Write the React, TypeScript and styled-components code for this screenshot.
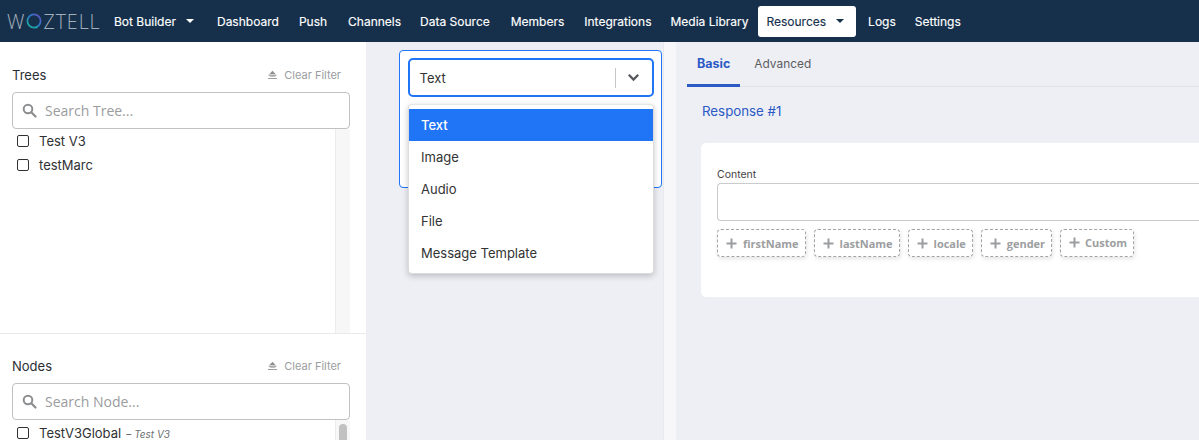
import React from "react";
import styled, { createGlobalStyle } from "styled-components";

const Global = createGlobalStyle`
  html, body { margin: 0; padding: 0; height: 100%; overflow: hidden; }
  body { font-family: "Inter", "Liberation Sans", Arial, sans-serif; background: #eeeff5; }
  * { box-sizing: border-box; }
`;

const Page = styled.div`
  width: 1199px;
  height: 440px;
  display: flex;
  flex-direction: column;
  overflow: hidden;
`;

const NavBar = styled.nav`
  height: 42px;
  flex: none;
  background: #16304c;
  display: flex;
  align-items: center;
  padding-left: 7px;
`;

const Logo = styled.div`
  width: 95px;
  margin-right: 12px;
  display: flex;
  align-items: center;
`;

const LogoWord = styled.span`
  font-family: "Open Sans", "Liberation Sans", Arial, sans-serif;
  font-size: 19.5px;
  letter-spacing: 1px;
  color: #a3afbb;
  font-weight: 300;
  display: inline-flex;
  align-items: center;
`;

const NavItem = styled.div<{ $active?: boolean; $gap: number }>`
  height: 31px;
  display: flex;
  align-items: center;
  gap: 10px;
  padding: 0 ${(p) => (p.$active ? "12px" : "0")} 0 ${(p) => (p.$active ? "8px" : "0")};
  margin-right: ${(p) => p.$gap}px;
  border-radius: 3px;
  font-size: 12px;
  font-weight: 400;
  -webkit-text-stroke: 0.15px currentColor;
  white-space: nowrap;
  background: ${(p) => (p.$active ? "#ffffff" : "transparent")};
  color: ${(p) => (p.$active ? "#16304c" : "#ffffff")};
`;

const Caret = styled.span<{ $dark?: boolean }>`
  width: 0;
  height: 0;
  border-left: 4px solid transparent;
  border-right: 4px solid transparent;
  border-top: 4px solid ${(p) => (p.$dark ? "#16304c" : "#ffffff")};
`;

const Body = styled.div`
  flex: 1;
  display: flex;
  min-height: 0;
`;

const Sidebar = styled.aside`
  width: 366px;
  flex: none;
  background: #ffffff;
  display: flex;
  flex-direction: column;
`;

const FilterSection = styled.section<{ $fill?: boolean }>`
  padding: ${(p) => (p.$fill ? "23px" : "22px")} 16px 0 12px;
  height: ${(p) => (p.$fill ? "292px" : "auto")};
  flex: ${(p) => (p.$fill ? "none" : "1")};
  display: flex;
  flex-direction: column;
  border-bottom: ${(p) => (p.$fill ? "1px solid #e9eaec" : "0")};
  min-height: 0;
  overflow: hidden;
`;

const SectionHead = styled.div`
  height: 20px;
  flex: none;
  display: flex;
  justify-content: space-between;
  align-items: center;
  padding-right: 9px;
  margin-bottom: 7px;
`;

const SectionTitle = styled.h3`
  margin: 0;
  font-size: 13px;
  font-weight: 400;
  color: #2b2f33;
`;

const ClearFilter = styled.span`
  display: flex;
  align-items: center;
  gap: 6px;
  font-size: 11px;
  color: #9b9d9f;
`;

const SearchBox = styled.div`
  height: 37px;
  flex: none;
  border: 1px solid #bfc1c4;
  border-radius: 4px;
  display: flex;
  align-items: center;
  gap: 8px;
  padding-left: 9px;
  background: #fff;
`;

const SearchText = styled.span`
  font-family: "Open Sans", "Liberation Sans", sans-serif;
  font-size: 14px;
  color: #9a9c9e;
`;

const ListArea = styled.div`
  flex: 1;
  display: flex;
  min-height: 0;
`;

const List = styled.div<{ $inset?: boolean }>`
  flex: 1;
  padding: ${(p) => (p.$inset ? "1px" : "0")} 0 0 5px;
`;

const ScrollTrack = styled.div`
  width: 15px;
  flex: none;
  background: #f7f7f7;
  border-left: 1px solid #ececec;
  display: flex;
  justify-content: center;
`;

const ScrollThumb = styled.div`
  width: 8px;
  height: 60px;
  margin-top: 4px;
  border-radius: 4px;
  background: #c1c1c1;
`;

const Row = styled.div`
  height: 24px;
  display: flex;
  align-items: center;
  gap: 10px;
  font-size: 13px;
  color: #2f3133;
  white-space: nowrap;
`;

const Check = styled.span`
  width: 12px;
  height: 12px;
  border: 1px solid #2f3133;
  border-radius: 2px;
  flex: none;
`;

const RowDash = styled.span`
  font-size: 10px;
  color: #55585c;
  margin: 0 3px 0 5px;
`;

const RowMeta = styled.em`
  font-size: 10px;
  color: #6d6f72;
`;

const Middle = styled.div`
  width: 297px;
  flex: none;
  background: #eeeff5;
  padding: 8px 0 0 33px;
`;

const Gutter = styled.div`
  width: 13px;
  flex: none;
  background: #f7f7f9;
  border-left: 1px solid #e8e9ed;
`;

const Card = styled.div`
  position: relative;
  width: 263px;
  height: 138px;
  border: 1px solid #1f75f5;
  border-radius: 4px;
  background: #fff;
  padding: 7px 7.5px 0;
`;

const SelectControl = styled.div`
  height: 39px;
  border: 2px solid #1f75f5;
  border-radius: 5px;
  display: flex;
  align-items: center;
  padding-left: 10px;
  font-size: 13px;
  color: #333;
  background: #fff;
`;

const SelectValue = styled.span`
  flex: 1;
`;

const SelectSep = styled.span`
  width: 1px;
  height: 20px;
  background: #c6c6c6;
`;

const SelectArrow = styled.span`
  width: 36px;
  display: flex;
  justify-content: center;
  align-items: center;
`;

const Menu = styled.div`
  position: absolute;
  left: 7.5px;
  top: 53px;
  width: 246px;
  background: #fff;
  border-radius: 4px;
  border: 1px solid #dcdcdc;
  border-top-color: #e6e6e6;
  box-shadow: 0 2px 6px rgba(0, 0, 0, 0.22);
  padding: 4px 0;
  z-index: 2;
`;

const MenuItem = styled.div<{ $selected?: boolean }>`
  height: 32px;
  display: flex;
  align-items: center;
  padding-left: 12.5px;
  font-size: 13px;
  font-weight: ${(p) => (p.$selected ? 500 : 400)};
  background: ${(p) => (p.$selected ? "#1f75f5" : "#fff")};
  color: ${(p) => (p.$selected ? "#fff" : "#333")};
`;

const Right = styled.main`
  flex: 1;
  min-width: 0;
  background: #eeeff5;
  padding-left: 11px;
  overflow: hidden;
`;

const Tabs = styled.div`
  height: 45px;
  display: flex;
  border-bottom: 1px solid #e2e3e6;
`;

const Tab = styled.div<{ $active?: boolean }>`
  height: 45px;
  display: flex;
  align-items: center;
  padding: 0 ${(p) => (p.$active ? "10px" : "13px")} ${(p) => (p.$active ? "0" : "3px")};
  margin-right: ${(p) => (p.$active ? "1px" : "0")};
  font-size: ${(p) => (p.$active ? "12.5px" : "11.9px")};
  font-weight: ${(p) => (p.$active ? 700 : 400)};
  color: ${(p) => (p.$active ? "#2b5ac4" : "#5b5d61")};
  border-bottom: ${(p) => (p.$active ? "3px solid #2b5ac4" : "0")};
`;

const ResponseTitle = styled.h2`
  margin: 14px 0 0 15px;
  height: 20px;
  font-size: 13.3px;
  font-weight: 400;
  line-height: 20px;
  color: #2b5ac4;
`;

const FormCard = styled.div`
  margin: 22px 0 0 14px;
  height: 154px;
  width: 520px;
  background: #fff;
  border-radius: 5px;
  padding: 25px 0 0 16px;
`;

const FieldLabel = styled.div`
  font-size: 10.5px;
  line-height: 14px;
  color: #444;
  margin-bottom: 1px;
`;

const TextField = styled.div`
  height: 38px;
  border: 1px solid #c9cbce;
  border-right: 0;
  border-radius: 4px 0 0 4px;
`;

const Chips = styled.div`
  display: flex;
  gap: 8px;
  margin-top: 8px;
`;

const Chip = styled.span<{ $lift?: boolean }>`
  height: 28px;
  display: inline-flex;
  align-items: center;
  gap: ${(p) => (p.$lift ? "5px" : "6px")};
  padding: ${(p) => (p.$lift ? "0 6px 2px 8px" : "0 6px 0 8px")};
  border: 1px dashed #a2a4a6;
  border-radius: 4px;
  box-shadow: 1px 2px 4px rgba(0, 0, 0, 0.1);
  font-family: "Open Sans", "Liberation Sans", sans-serif;
  font-size: 10.98px;
  font-weight: 700;
  color: #9c9e9f;
`;

const EraserIcon = () => (
  <svg width="11" height="10" viewBox="0 0 11 10" aria-hidden="true">
    <path d="M5.5.8 8.6 3.9H2.4Z" fill="#8f9193" />
    <path d="M1.8 4.5h7.4l.6.6-1.8 1.7H3.4L1.2 5.1Z" fill="#a9abad" />
    <rect x="1" y="8" width="9" height="1" fill="#9b9d9f" />
  </svg>
);

const SearchIcon = () => (
  <svg width="15" height="15" viewBox="0 0 15 15" aria-hidden="true">
    <circle cx="6" cy="6" r="4.3" fill="none" stroke="#8c8e90" strokeWidth="2" />
    <path d="m9.3 9.3 4.2 4.2" stroke="#8c8e90" strokeWidth="2.2" strokeLinecap="round" />
  </svg>
);

const ChevronIcon = () => (
  <svg width="13" height="9" viewBox="0 0 13 9" aria-hidden="true">
    <path d="m1.8 1.8 4.7 4.7 4.7-4.7" fill="none" stroke="#55585c" strokeWidth="2.3" />
  </svg>
);

const PlusIcon = () => (
  <svg width="11" height="11" viewBox="0 0 11 11" aria-hidden="true">
    <path d="M5.5.5v10M.5 5.5h10" stroke="#9c9e9f" strokeWidth="2" />
  </svg>
);

const LogoO = () => (
  <svg width="18" height="18" viewBox="0 0 18 18" aria-hidden="true">
    <defs>
      <linearGradient id="wz" x1="0" y1="1" x2="1" y2="0">
        <stop offset="0" stopColor="#19b79a" />
        <stop offset="0.55" stopColor="#2b78c9" />
        <stop offset="1" stopColor="#6a4fc2" />
      </linearGradient>
    </defs>
    <circle cx="9" cy="9" r="6.6" fill="none" stroke="url(#wz)" strokeWidth="1.7" />
    <path d="m9 16 3.5.6-1-2.6" fill="#19a7a0" />
  </svg>
);

const navItems: { label: string; gap: number; caret?: boolean; active?: boolean }[] = [
  { label: "Bot Builder", gap: 23, caret: true },
  { label: "Dashboard", gap: 20 },
  { label: "Push", gap: 21 },
  { label: "Channels", gap: 19 },
  { label: "Data Source", gap: 21 },
  { label: "Members", gap: 20 },
  { label: "Integrations", gap: 19 },
  { label: "Media Library", gap: 10 },
  { label: "Resources", gap: 12, caret: true, active: true },
  { label: "Logs", gap: 19 },
  { label: "Settings", gap: 0 },
];

const chips = ["firstName", "lastName", "locale", "gender", "Custom"];
const options = ["Text", "Image", "Audio", "File", "Message Template"];

export default function App() {
  return (
    <Page>
      <Global />
      <NavBar>
        <Logo>
          <LogoWord>
            W<LogoO />ZTELL
          </LogoWord>
        </Logo>
        {navItems.map((n) => (
          <NavItem key={n.label} $gap={n.gap} $active={n.active}>
            {n.label}
            {n.caret && <Caret $dark={n.active} />}
          </NavItem>
        ))}
      </NavBar>
      <Body>
        <Sidebar>
          <FilterSection $fill>
            <SectionHead>
              <SectionTitle>Trees</SectionTitle>
              <ClearFilter>
                <EraserIcon /> Clear Filter
              </ClearFilter>
            </SectionHead>
            <SearchBox>
              <SearchIcon />
              <SearchText>Search Tree...</SearchText>
            </SearchBox>
            <ListArea>
              <List>
                <Row><Check />Test V3</Row>
                <Row><Check />testMarc</Row>
              </List>
              <ScrollTrack />
            </ListArea>
          </FilterSection>
          <FilterSection>
            <SectionHead>
              <SectionTitle>Nodes</SectionTitle>
              <ClearFilter>
                <EraserIcon /> Clear Filter
              </ClearFilter>
            </SectionHead>
            <SearchBox>
              <SearchIcon />
              <SearchText>Search Node...</SearchText>
            </SearchBox>
            <ListArea>
              <List $inset>
                <Row>
                  <Check />
                  <span>TestV3Global<RowDash>–</RowDash><RowMeta>Test V3</RowMeta></span>
                </Row>
              </List>
              <ScrollTrack>
                <ScrollThumb />
              </ScrollTrack>
            </ListArea>
          </FilterSection>
        </Sidebar>
        <Middle>
          <Card>
            <SelectControl>
              <SelectValue>Text</SelectValue>
              <SelectSep />
              <SelectArrow><ChevronIcon /></SelectArrow>
            </SelectControl>
            <Menu>
              {options.map((o, i) => (
                <MenuItem key={o} $selected={i === 0}>{o}</MenuItem>
              ))}
            </Menu>
          </Card>
        </Middle>
        <Gutter />
        <Right>
          <Tabs>
            <Tab $active>Basic</Tab>
            <Tab>Advanced</Tab>
          </Tabs>
          <ResponseTitle>Response #1</ResponseTitle>
          <FormCard>
            <FieldLabel>Content</FieldLabel>
            <TextField />
            <Chips>
              {chips.map((c) => (
                <Chip key={c} $lift={c === "Custom"}>
                  <PlusIcon />
                  {c}
                </Chip>
              ))}
            </Chips>
          </FormCard>
        </Right>
      </Body>
    </Page>
  );
}
